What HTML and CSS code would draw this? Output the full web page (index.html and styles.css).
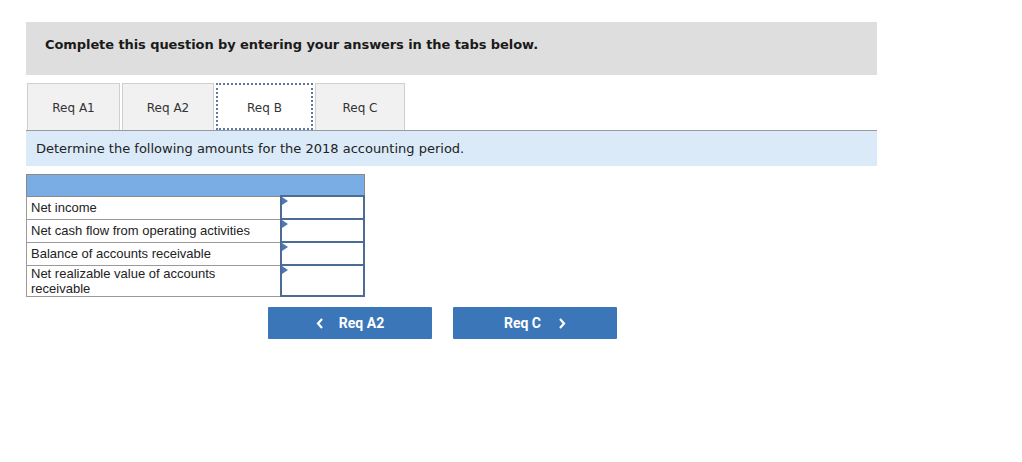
FILE: index.html
```html
<!DOCTYPE html>
<html>
<head>
<meta charset="utf-8">
<link rel="stylesheet" href="styles.css">
</head>
<body>
<div class="page">
  <div class="banner">Complete this question by entering your answers in the tabs below.</div>
  <div class="tabs">
    <div class="tab">Req A1</div>
    <div class="tab">Req A2</div>
    <div class="tab active">Req B</div>
    <div class="tab">Req C</div>
  </div>
  <div class="instr">Determine the following amounts for the 2018 accounting period.</div>
  <table class="grid">
    <tr class="head"><td colspan="2"></td></tr>
    <tr><td class="label">Net income</td><td class="inp"><span class="tri"></span></td></tr>
    <tr><td class="label">Net cash flow from operating activities</td><td class="inp"><span class="tri"></span></td></tr>
    <tr><td class="label">Balance of accounts receivable</td><td class="inp"><span class="tri"></span></td></tr>
    <tr class="tall"><td class="label">Net realizable value of accounts receivable</td><td class="inp"><span class="tri"></span></td></tr>
  </table>
  <div class="nav">
    <button class="btn"><svg class="chev" width="8" height="11" viewBox="0 0 8 11"><polyline points="6,1 2,5.5 6,10" fill="none" stroke="#fff" stroke-width="2.2"/></svg>Req A2</button>
    <button class="btn">Req C<svg class="chev r" width="8" height="11" viewBox="0 0 8 11"><polyline points="2,1 6,5.5 2,10" fill="none" stroke="#fff" stroke-width="2.2"/></svg></button>
  </div>
</div>
</body>
</html>
```
FILE: styles.css
```css
html, body { margin: 0; padding: 0; background: #fff; }
.page { padding: 22px 0 0 26px; width: 851px; font-family: "DejaVu Sans", Verdana, sans-serif; color: #222; }
.banner {
  height: 53px; background: #dedede; padding-left: 19px;
  display: flex; align-items: center; box-sizing: border-box;
  font-weight: bold; font-size: 13px; letter-spacing: -0.08px; color: #1a1a1a; padding-bottom: 9px;
}
.tabs { display: flex; gap: 2px; margin-top: 8px; height: 47px; padding-left: 1px; }
.tab {
  width: 93px; box-sizing: border-box; background: #f1f1f1; border: 1px solid #cfcfcf; border-bottom: none;
  display: flex; align-items: center; justify-content: center; font-size: 12px; color: #333; padding-top: 2px;
}
.tab:nth-child(2) { width: 92px; }
.tab.active { width: 97px; background: #fff; border: 2px dotted #5d7aa6; }
.tab:nth-child(4) { width: 90px; }
.instr {
  border-top: 1px solid #9a9a9a; background: #dbeaf8; height: 36px; box-sizing: border-box;
  display: flex; align-items: center; padding-left: 10px; font-size: 13px; color: #222;
}
.grid { margin-top: 8px; border-collapse: collapse; width: 339px; font-family: "Liberation Sans", Arial, sans-serif; font-size: 13px; color: #222; }
.grid td { padding: 0; }
.grid .head td { height: 20px; background: #7aade4; border: 1px solid #8a8a8a; }
.grid .label { border: 1px solid #9a9a9a; padding: 0 4px 0 4px; height: 22px; line-height: 15px; }
.grid .tall .label { height: 30px; }
.grid .inp { width: 81px; border: 2px solid #4c6c95; position: relative; background: #fff; }
.tri { position: absolute; left: 0; top: 0; width: 0; height: 0; border-left: 6px solid #4c78b5; border-top: 4px solid transparent; border-bottom: 4px solid transparent; }
.nav { display: flex; gap: 21px; margin: 10px 0 0 242px; }
.btn {
  width: 164px; height: 32px; background: #3b76b9; color: #fff; border: none; border-radius: 1px;
  font-family: Roboto, "Liberation Sans", Arial, sans-serif; font-weight: bold; font-size: 14px;
  display: flex; align-items: center; justify-content: center; padding: 0;
}
.chev { margin-right: 15px; }
.chev.r { margin-right: 0; margin-left: 17px; }
```
